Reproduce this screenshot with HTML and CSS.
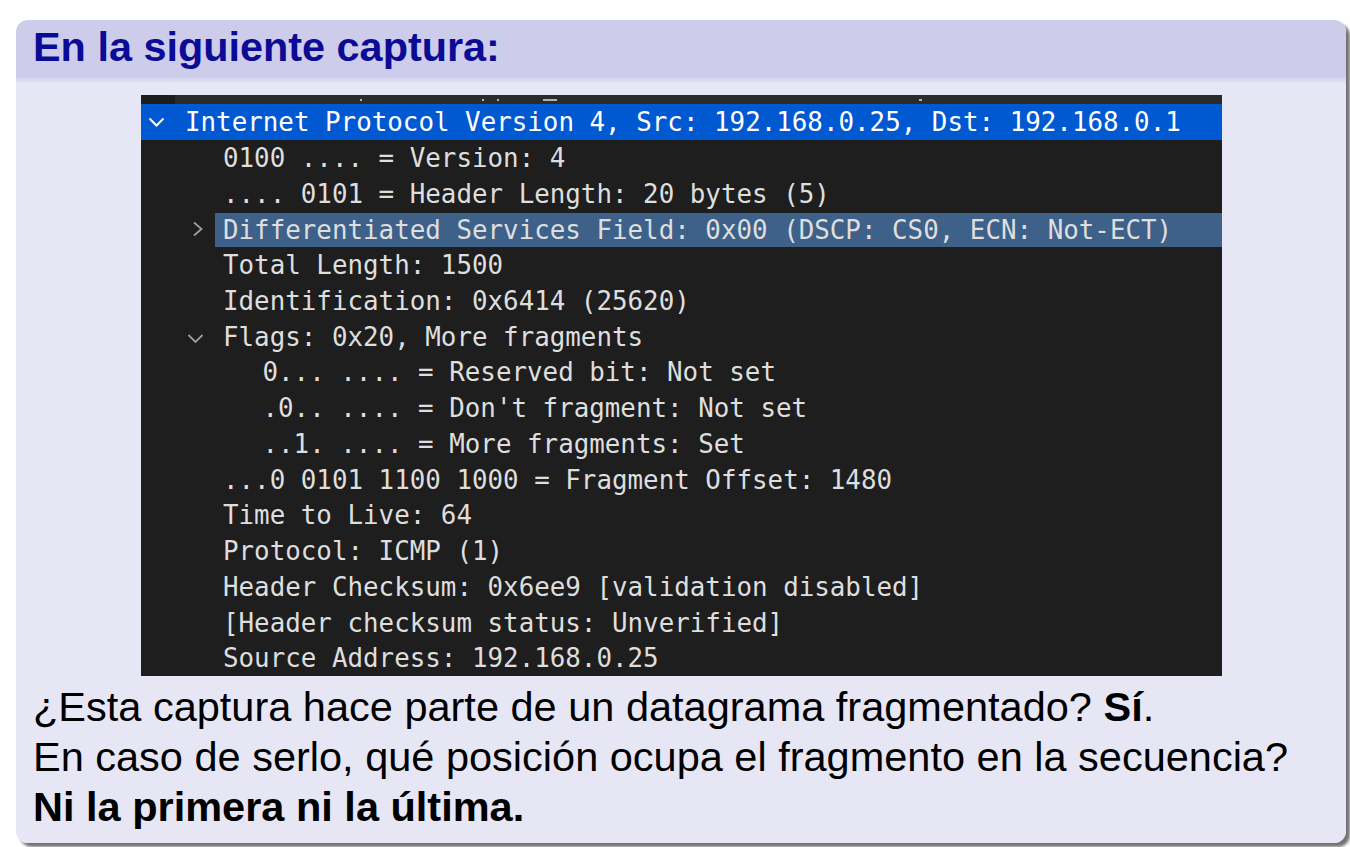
FILE: index.html
```html
<!DOCTYPE html>
<html lang="es">
<head>
<meta charset="utf-8">
<title>En la siguiente captura</title>
<link rel="stylesheet" href="styles.css">
</head>
<body>
<div class="block">
  <div class="block-title">En la siguiente captura:</div>
  <div class="block-body">
    <div class="capture">
      <div class="strip"><span class="dk"></span><span class="mk m1"></span><span class="mk m2"></span><span class="mk m3"></span><span class="mk m4"></span><span class="mk m5"></span></div>
      <div class="row l0 sel"><span class="tw"><svg width="17" height="10" viewBox="0 0 17 10"><polyline points="1.5,1.5 8.5,8.5 15.5,1.5" fill="none" stroke="#ffffff" stroke-width="2"/></svg></span><span class="lbl">Internet Protocol Version 4, Src: 192.168.0.25, Dst: 192.168.0.1</span></div>
      <div class="row l1"><span class="tw"></span><span class="lbl">0100 .... = Version: 4</span></div>
      <div class="row l1"><span class="tw"></span><span class="lbl">.... 0101 = Header Length: 20 bytes (5)</span></div>
      <div class="row l1"><span class="tw"><svg width="17" height="16" viewBox="0 0 17 16"><polyline points="7,1.5 14.5,8 7,14.5" fill="none" stroke="#9c9c9c" stroke-width="1.8"/></svg></span><span class="lbl hl">Differentiated Services Field: 0x00 (DSCP: CS0, ECN: Not-ECT)</span></div>
      <div class="row l1"><span class="tw"></span><span class="lbl">Total Length: 1500</span></div>
      <div class="row l1"><span class="tw"></span><span class="lbl">Identification: 0x6414 (25620)</span></div>
      <div class="row l1"><span class="tw tw-low"><svg width="17" height="11" viewBox="0 0 17 11"><polyline points="1.5,2 8.5,9 15.5,2" fill="none" stroke="#9c9c9c" stroke-width="1.8"/></svg></span><span class="lbl">Flags: 0x20, More fragments</span></div>
      <div class="row l2"><span class="tw"></span><span class="lbl">0... .... = Reserved bit: Not set</span></div>
      <div class="row l2"><span class="tw"></span><span class="lbl">.0.. .... = Don't fragment: Not set</span></div>
      <div class="row l2"><span class="tw"></span><span class="lbl">..1. .... = More fragments: Set</span></div>
      <div class="row l1"><span class="tw"></span><span class="lbl">...0 0101 1100 1000 = Fragment Offset: 1480</span></div>
      <div class="row l1"><span class="tw"></span><span class="lbl">Time to Live: 64</span></div>
      <div class="row l1"><span class="tw"></span><span class="lbl">Protocol: ICMP (1)</span></div>
      <div class="row l1"><span class="tw"></span><span class="lbl">Header Checksum: 0x6ee9 [validation disabled]</span></div>
      <div class="row l1"><span class="tw"></span><span class="lbl">[Header checksum status: Unverified]</span></div>
      <div class="row l1"><span class="tw"></span><span class="lbl">Source Address: 192.168.0.25</span></div>
    </div>
    <p class="answer">¿Esta captura hace parte de un datagrama fragmentado? <b>Sí</b>.<br>En caso de serlo, qué posición ocupa el fragmento en la secuencia?<br><b>Ni la primera ni la última.</b></p>
  </div>
</div>
</body>
</html>
```
FILE: styles.css
```css
html, body {
  margin: 0;
  padding: 0;
  background: #ffffff;
}
body {
  padding: 20px 4px 4px 16px;
  width: 1350px;
  height: 847px;
  box-sizing: border-box;
}
.block {
  width: 1330px;
  height: 823px;
  border-radius: 12px;
  background: linear-gradient(to bottom, #cdcdeb 0, #cdcdeb 57px, #e6e6f5 63px, #e6e6f5 100%);
  box-shadow: 4px 4px 3px rgba(0, 0, 0, 0.55);
  overflow: hidden;
}
.block-title {
  height: 57px;
  box-sizing: border-box;
  padding: 4px 0 0 17px;
  font-family: "Liberation Sans", Arial, sans-serif;
  font-weight: bold;
  font-size: 41.4px;
  line-height: 46px;
  color: #0b0b96;
}
.block-body {
  padding-top: 18px;
}
.capture {
  width: 1081px;
  margin: 0 auto;
  background: #1e1e1e;
  font-family: "DejaVu Sans Mono", monospace;
  font-size: 25.85px;
  color: #dedede;
}
.strip {
  height: 9px;
  background: #2b2b2b;
  display: flex;
  align-items: flex-start;
}
.dk {
  width: 34px;
  height: 9px;
  background: #1d1d1d;
}
.mk {
  height: 1.5px;
  margin-top: 4px;
  background: #b0b0b0;
}
.m1 { margin-left: 185px; width: 2px; }
.m2 { margin-left: 120px; width: 2px; }
.m3 { margin-left: 13px; width: 2px; }
.m4 { margin-left: 44px; width: 14px; }
.m5 { margin-left: 362px; width: 3px; }
.row {
  height: 35.75px;
  display: flex;
  align-items: stretch;
  white-space: pre;
}
.tw {
  width: 17px;
  flex: none;
  display: flex;
  align-items: center;
  justify-content: center;
}
.tw-low {
  padding-top: 5px;
}
.tw svg {
  display: block;
}
.l0 .tw { margin-left: 7px; }
.l1 .tw { margin-left: 46px; }
.l2 .tw { margin-left: 85.5px; }
.lbl {
  margin-left: 11px;
  padding-left: 8.5px;
  padding-top: 1px;
  line-height: 34.75px;
}
.sel {
  background: #0059d0;
  color: #ffffff;
}
.sel .lbl {
  margin-left: 12px;
}
.hl {
  flex: 1;
  background: #3e6189;
  margin-top: 1.5px;
  padding-top: 0;
  line-height: 34.25px;
}
.answer {
  margin: 6px 0 0 0;
  padding-left: 17px;
  font-family: "Liberation Sans", Arial, sans-serif;
  font-size: 41.5px;
  line-height: 50px;
  color: #000000;
}
.answer b {
  font-weight: bold;
}
```
